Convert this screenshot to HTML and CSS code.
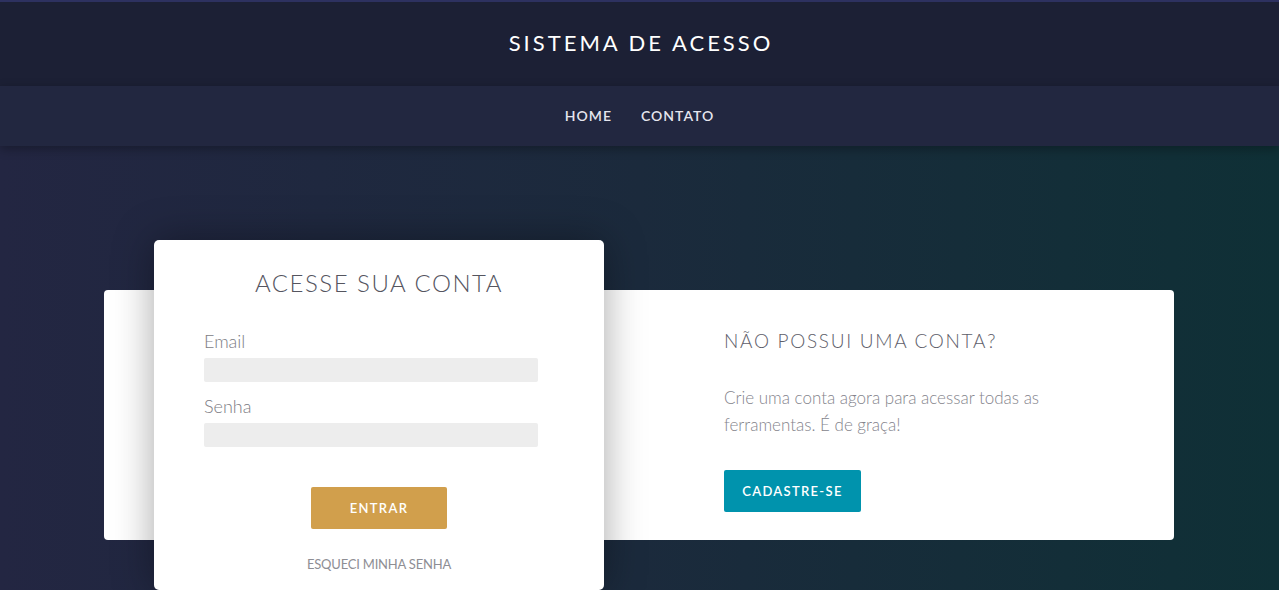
FILE: index.html
```html
<!DOCTYPE html>
<html lang="pt-BR">
<head>
<meta charset="utf-8">
<title>Sistema de Acesso</title>
<link rel="stylesheet" href="styles.css">
</head>
<body>
<header class="topbar">
  <h1 class="brand">SISTEMA DE ACESSO</h1>
</header>
<nav class="menu">
  <a class="menu-link" href="#">HOME</a>
  <a class="menu-link" href="#">CONTATO</a>
</nav>
<main class="stage">
  <section class="panel">
    <form class="login">
      <h2 class="login-title">ACESSE SUA CONTA</h2>
      <label class="field-label" for="email">Email</label>
      <input class="field" id="email" type="text">
      <label class="field-label field-label-second" for="senha">Senha</label>
      <input class="field" id="senha" type="password">
      <button class="btn btn-gold" type="button">ENTRAR</button>
      <a class="forgot" href="#">ESQUECI MINHA SENHA</a>
    </form>
    <div class="signup">
      <h3 class="signup-title">NÃO POSSUI UMA CONTA?</h3>
      <p class="signup-text">Crie uma conta agora para acessar todas as ferramentas. É de graça!</p>
      <button class="btn btn-teal" type="button">CADASTRE-SE</button>
    </div>
  </section>
</main>
</body>
</html>
```
FILE: styles.css
```css
* { box-sizing: border-box; }
html, body { margin: 0; padding: 0; }
body {
  font-family: Lato, "Open Sans", sans-serif;
  height: 590px;
  overflow: hidden;
  background: linear-gradient(to right, #232642 0%, #1b2a3c 50%, #0f3036 100%);
}
.topbar {
  background: #1c2035;
  border-top: 2px solid #2d3160;
  height: 86px;
  display: flex;
  align-items: center;
  justify-content: center;
  padding-bottom: 4px;
}
.brand {
  margin: 0;
  color: #ffffff;
  font-weight: 400;
  font-size: 22px;
  letter-spacing: 3px;
  padding-left: 3px;
}
.menu {
  position: relative;
  z-index: 1;
  background: #222740;
  height: 60px;
  display: flex;
  align-items: center;
  justify-content: center;
  gap: 29px;
  padding-bottom: 2px;
  box-shadow: 0 3px 10px rgba(0, 0, 0, 0.3);
}
.menu-link {
  color: #e6e6ee;
  text-decoration: none;
  font-size: 14px;
  font-weight: 600;
  letter-spacing: 1px;
}
.stage {
  padding-top: 144px;
  padding-right: 1px;
  display: flex;
  justify-content: center;
}
.panel {
  width: 1070px;
  background: #ffffff;
  border-radius: 4px;
  display: flex;
  align-items: flex-start;
}
.login {
  width: 450px;
  height: 350px;
  margin: -50px 0 -50px 50px;
  background: #ffffff;
  border-radius: 5px;
  box-shadow: 0 0 40px rgba(0, 0, 0, 0.35);
  padding: 25px 50px 17px;
  display: flex;
  flex-direction: column;
}
.login-title {
  margin: 0 0 28px;
  text-align: center;
  font-size: 24px;
  line-height: 36px;
  font-weight: 300;
  letter-spacing: 1.5px;
  color: #55555f;
}
.field-label {
  font-size: 18px;
  line-height: 24px;
  font-weight: 300;
  color: #7c7c84;
  margin-bottom: 5px;
}
.field-label-second { margin-top: 12px; }
.field {
  height: 24px;
  border: none;
  background: #ededed;
  border-radius: 2px;
  width: 334px;
}
.btn {
  border: none;
  border-radius: 2px;
  color: #ffffff;
  font-family: Lato, "Open Sans", sans-serif;
  font-size: 13px;
  font-weight: 600;
  height: 42px;
  letter-spacing: 1.3px;
}
.btn-gold {
  background: #d19f4c;
  width: 136px;
  align-self: center;
  margin-top: 40px;
}
.forgot {
  margin-top: 26px;
  text-align: center;
  font-size: 13px;
  line-height: 18px;
  color: #8e8e94;
  text-decoration: none;
  letter-spacing: -0.2px;
}
.signup {
  margin-left: 120px;
  width: 350px;
  padding: 38px 0 28px;
}
.signup-title {
  margin: 0;
  font-size: 19px;
  line-height: 26px;
  font-weight: 300;
  letter-spacing: 1.7px;
  color: #5e5e6a;
}
.signup-text {
  margin: 30px 0 0;
  font-size: 17px;
  line-height: 27px;
  font-weight: 300;
  color: #84848c;
}
.btn-teal {
  margin-top: 32px;
  background: #0093ad;
  width: 137px;
}
```
